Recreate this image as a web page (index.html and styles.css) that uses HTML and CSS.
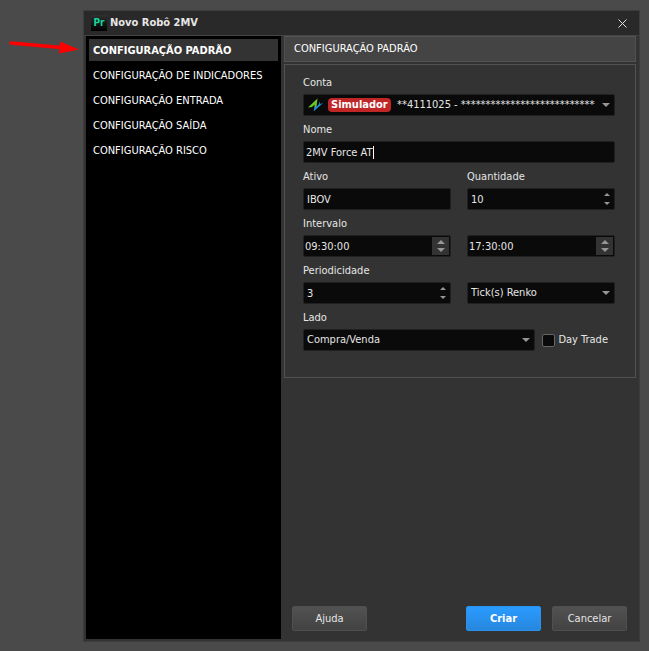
FILE: index.html
```html
<!DOCTYPE html>
<html lang="pt-BR">
<head>
    <meta charset="UTF-8">
    <meta name="viewport" content="width=device-width, initial-scale=1.0">
    <title>Novo Robô 2MV</title>
    <link rel="stylesheet" href="styles.css">
</head>
<body>
    <svg class="pointer" viewBox="0 0 72 18" aria-hidden="true">
        <path d="M4 6 L54 10.5" stroke="#ff0000" stroke-width="3.5" stroke-linecap="round"/>
        <path d="M53 4.5 L72 12.5 L52 16.5 Z" fill="#ff0000"/>
    </svg>

    <div class="window">
        <header class="titlebar">
            <span class="app-icon">Pr</span>
            <h1 class="title">Novo Robô 2MV</h1>
            <button class="close" type="button" aria-label="Fechar">
                <svg viewBox="0 0 9 9"><path d="M0.5 0.5 L8.5 8.5 M8.5 0.5 L0.5 8.5"/></svg>
            </button>
        </header>

        <div class="main">
            <nav class="sidebar">
                <a class="nav-item active" href="#padrao">CONFIGURAÇÃO PADRÃO</a>
                <a class="nav-item" href="#indicadores">CONFIGURAÇÃO DE INDICADORES</a>
                <a class="nav-item" href="#entrada">CONFIGURAÇÃO ENTRADA</a>
                <a class="nav-item" href="#saida">CONFIGURAÇÃO SAÍDA</a>
                <a class="nav-item" href="#risco">CONFIGURAÇÃO RISCO</a>
            </nav>

            <form class="content" id="padrao">
                <h2 class="section-title">CONFIGURAÇÃO PADRÃO</h2>

                <div class="panel">
                    <div class="group">
                        <label for="conta">Conta</label>
                        <div class="field">
                            <select class="account-select" id="conta">
                                <option>**4111025 - **********************************</option>
                            </select>
                            <div class="account">
                                <svg class="account-logo" viewBox="0 0 15 14">
                                    <path d="M0 9.5 L9.5 0.5 L8.5 8.5 L6.5 10 L6.5 6.5 L4 9 Z" fill="#6cc82a"/>
                                    <path d="M15 5 L5.5 13.5 L6.5 9.5 L8.5 8 L8.5 9 L11 6 L11.5 3 L12 6 Z" fill="#1e8fe0"/>
                                </svg>
                                <span class="badge">Simulador</span>
                            </div>
                            <svg class="arrow" viewBox="0 0 8 4"><path d="M0 0 H8 L4 4 Z"/></svg>
                        </div>
                    </div>

                    <div class="group">
                        <label for="nome">Nome</label>
                        <div class="field">
                            <input class="name-input" id="nome" type="text" value="2MV Force AT">
                            <span class="caret"></span>
                        </div>
                    </div>

                    <div class="row">
                        <div class="group">
                            <label for="ativo">Ativo</label>
                            <div class="field">
                                <input id="ativo" type="text" value="IBOV">
                            </div>
                        </div>
                        <div class="group">
                            <label for="quantidade">Quantidade</label>
                            <div class="field">
                                <input id="quantidade" type="text" inputmode="numeric" value="10">
                                <div class="spin">
                                    <button type="button" aria-label="Aumentar"><svg viewBox="0 0 6 3"><path d="M0 3 H6 L3 0 Z"/></svg></button>
                                    <button type="button" aria-label="Diminuir"><svg viewBox="0 0 6 3"><path d="M0 0 H6 L3 3 Z"/></svg></button>
                                </div>
                            </div>
                        </div>
                    </div>

                    <div class="row">
                        <div class="group">
                            <label for="inicio">Intervalo</label>
                            <div class="field time">
                                <input id="inicio" type="text" value="09:30:00">
                                <div class="spin">
                                    <button type="button" aria-label="Aumentar"><svg viewBox="0 0 8 4"><path d="M0 4 H8 L4 0 Z"/></svg></button>
                                    <button type="button" aria-label="Diminuir"><svg viewBox="0 0 8 4"><path d="M0 0 H8 L4 4 Z"/></svg></button>
                                </div>
                            </div>
                        </div>
                        <div class="group">
                            <div class="field time">
                                <input id="fim" type="text" value="17:30:00" aria-label="Fim do intervalo">
                                <div class="spin">
                                    <button type="button" aria-label="Aumentar"><svg viewBox="0 0 8 4"><path d="M0 4 H8 L4 0 Z"/></svg></button>
                                    <button type="button" aria-label="Diminuir"><svg viewBox="0 0 8 4"><path d="M0 0 H8 L4 4 Z"/></svg></button>
                                </div>
                            </div>
                        </div>
                    </div>

                    <div class="row">
                        <div class="group">
                            <label for="periodicidade">Periodicidade</label>
                            <div class="field">
                                <input id="periodicidade" type="text" inputmode="numeric" value="3">
                                <div class="spin">
                                    <button type="button" aria-label="Aumentar"><svg viewBox="0 0 6 3"><path d="M0 3 H6 L3 0 Z"/></svg></button>
                                    <button type="button" aria-label="Diminuir"><svg viewBox="0 0 6 3"><path d="M0 0 H6 L3 3 Z"/></svg></button>
                                </div>
                            </div>
                        </div>
                        <div class="group">
                            <div class="field">
                                <select id="unidade" aria-label="Unidade da periodicidade">
                                    <option>Tick(s) Renko</option>
                                </select>
                                <svg class="arrow" viewBox="0 0 8 4"><path d="M0 0 H8 L4 4 Z"/></svg>
                            </div>
                        </div>
                    </div>

                    <div class="row side-row">
                        <div class="group">
                            <label for="lado">Lado</label>
                            <div class="field">
                                <select id="lado">
                                    <option>Compra/Venda</option>
                                </select>
                                <svg class="arrow" viewBox="0 0 8 4"><path d="M0 0 H8 L4 4 Z"/></svg>
                            </div>
                        </div>
                        <label class="check"><input type="checkbox">Day Trade</label>
                    </div>
                </div>

                <footer class="actions">
                    <button class="btn help" type="button">Ajuda</button>
                    <button class="btn primary" type="submit">Criar</button>
                    <button class="btn" type="button">Cancelar</button>
                </footer>
            </form>
        </div>
    </div>
</body>
</html>
```
FILE: styles.css
```css
* {
    margin: 0;
    padding: 0;
    box-sizing: border-box;
}

body {
    display: flex;
    min-height: 100vh;
    padding: 10px 9px 9px 83px;
    background: #4a4a4a;
    color: #e6e6e6;
    font-family: Tahoma, 'DejaVu Sans Condensed', 'DejaVu Sans', sans-serif;
    font-size: 11px;
    line-height: 16px;
}

button,
input,
select {
    font: inherit;
    color: inherit;
    border: none;
    background: none;
    outline: none;
    appearance: none;
}

.pointer {
    position: absolute;
    top: 37px;
    left: 7px;
    width: 72px;
    height: 18px;
}

.window {
    flex: 1;
    min-width: 0;
    display: flex;
    flex-direction: column;
    background: #333333;
    border: 1px solid #3d3d3d;
}

/* Title bar */
.titlebar {
    display: flex;
    align-items: center;
    gap: 3px;
    height: 25px;
    padding: 0 12px 0 7px;
    background: #292929;
    border-bottom: 1px solid #444444;
}

.app-icon {
    width: 16px;
    height: 16px;
    background: linear-gradient(#303030, #000000);
    color: #10d69a;
    font-size: 10px;
    font-weight: bold;
    line-height: 16px;
    text-align: center;
}

.title {
    flex: 1;
    font-size: 11px;
    font-weight: bold;
    line-height: 18px;
}

.close {
    width: 10px;
    height: 16px;
    display: flex;
    align-items: center;
    justify-content: center;
}

.close svg {
    width: 9px;
    height: 9px;
    stroke: #e0e0e0;
    fill: none;
}

.main {
    flex: 1;
    display: flex;
    gap: 3px;
    padding: 0 3px 2px 2px;
}

/* Sidebar */
.sidebar {
    flex: none;
    width: 195px;
    padding: 3px;
    display: flex;
    flex-direction: column;
    gap: 3px;
    background: #000000;
}

.nav-item {
    padding: 4px 4px 2px;
    color: #ffffff;
    text-decoration: none;
    white-space: nowrap;
}

.nav-item.active {
    background: #333333;
    font-weight: bold;
}

/* Form */
.content {
    flex: 1;
    min-width: 0;
    display: flex;
    flex-direction: column;
    gap: 2px;
}

.section-title {
    padding: 4px 9px;
    background: #444444;
    border: 1px solid #525252;
    color: #ffffff;
    font-size: 11px;
    font-weight: normal;
}

.panel {
    display: flex;
    flex-direction: column;
    gap: 6px;
    padding: 10px 20px 26px 18px;
    border: 1px solid #525252;
}

.group {
    flex: 1;
    min-width: 0;
    display: flex;
    flex-direction: column;
    gap: 3px;
}

.row {
    display: flex;
    align-items: flex-end;
    gap: 16px;
}

.side-row {
    gap: 7px;
}

.field {
    position: relative;
    display: flex;
    align-items: center;
    height: 22px;
    background: #0a0a0a;
    border: 1px solid #202020;
    border-radius: 2px;
}

.field input,
.field select {
    flex: 1;
    min-width: 0;
    height: 20px;
    padding: 0 3px;
}

.field select {
    border-right: 19px solid transparent;
}

.field .name-input {
    flex: none;
    field-sizing: content;
    padding: 0 0 0 2px;
}

.caret {
    width: 1px;
    height: 13px;
    background: #ffffff;
}

.field .account-select {
    padding: 0 0 0 93px;
}

.account {
    position: absolute;
    left: 4px;
    display: flex;
    align-items: center;
    gap: 5px;
    pointer-events: none;
}

.account-logo {
    width: 15px;
    height: 14px;
}

.badge {
    padding: 0 3px;
    height: 14px;
    line-height: 14px;
    border-radius: 4px;
    background: #c02626;
    color: #ffffff;
    font-size: 11px;
    font-weight: bold;
}

.arrow {
    position: absolute;
    right: 4px;
    width: 8px;
    height: 4px;
    fill: #969696;
    pointer-events: none;
}

.spin {
    display: flex;
    flex-direction: column;
    justify-content: center;
    gap: 6px;
    margin-right: 4px;
}

.spin button {
    display: flex;
    align-items: center;
    justify-content: center;
}

.spin svg {
    width: 6px;
    height: 3px;
    fill: #969696;
}

.time input {
    padding: 0 1px;
}

.time .spin {
    gap: 4px;
    width: 17px;
    height: 18px;
    margin-right: 1px;
    background: #333333;
}

.time .spin svg {
    width: 8px;
    height: 4px;
}

.check {
    display: flex;
    align-items: center;
    gap: 3px;
    height: 22px;
    padding-right: 7px;
    white-space: nowrap;
}

.check input {
    width: 13px;
    height: 13px;
    background: #0a0a0a;
    border: 1px solid #666666;
    border-radius: 2px;
}

/* Buttons */
.actions {
    display: flex;
    gap: 11px;
    margin-top: auto;
    padding: 0 9px 8px 8px;
}

.btn {
    width: 75px;
    height: 25px;
    background: linear-gradient(#525252, #424242);
    border: 1px solid #505050;
    border-radius: 2px;
}

.btn.help {
    margin-right: auto;
}

.btn.primary {
    background: linear-gradient(#2a9bff, #2787de);
    border-color: #2a93f0;
    color: #ffffff;
    font-weight: bold;
}
```
